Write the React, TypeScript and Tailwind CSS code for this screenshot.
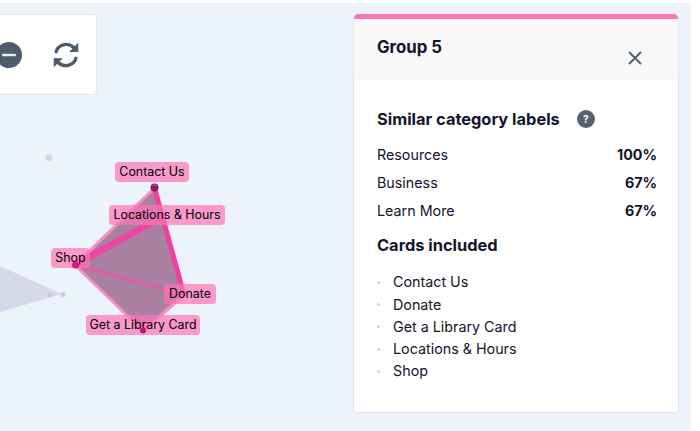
import React from "react";

const labels = [
  { t: "Contact Us", x: 115, y: 162, w: 74, h: 20 },
  { t: "Locations & Hours", x: 109, y: 205, w: 116, h: 20 },
  { t: "Shop", x: 51, y: 248, w: 39, h: 20 },
  { t: "Donate", x: 164, y: 284, w: 52, h: 20 },
  { t: "Get a Library Card", x: 86, y: 315, w: 114, h: 20 },
];

const sims = [
  ["Resources", "100%", "h-[27px]"],
  ["Business", "67%", "h-[28px]"],
  ["Learn More", "67%", "h-[28px]"],
];

const cards = ["Contact Us", "Donate", "Get a Library Card", "Locations & Hours", "Shop"];

export default function App() {
  return (
    <div className="w-[700px] h-[431px] bg-white overflow-hidden pt-[3px] pr-[9px] text-[#14142b] font-['Inter','Liberation_Sans',sans-serif]">
      <div className="relative h-[428px] bg-[#edf3fb] flex items-start justify-end pr-[12px] pt-[11px]">
        {/* Toolbar */}
        <div className="absolute left-[-40px] top-[11px] w-[137px] h-[81px] bg-white rounded-[5px] border border-[#e3e6ea] flex items-center justify-end pr-[15px] gap-[28px]">
          <svg width="26" height="26" viewBox="0 0 26 26" className="mr-[1px]">
            <circle cx="13" cy="13" r="13" fill="#4e5d6c" />
            <rect x="6" y="11.8" width="14" height="2.4" rx="1" fill="#e8ecef" />
          </svg>
          <svg width="30" height="30" viewBox="0 0 24 24" fill="none" stroke="#4e5d6c" strokeWidth="2.6">
            <path d="M3.8 10.5A8.5 8.5 0 0 1 18.2 6L21 8.8" />
            <path d="M21.8 2.2v7.3h-7.3z" fill="#4e5d6c" stroke="none" />
            <path d="M20.2 13.5A8.5 8.5 0 0 1 5.8 18L3 15.2" />
            <path d="M2.2 21.8v-7.3h7.3z" fill="#4e5d6c" stroke="none" />
          </svg>
        </div>

        {/* Cluster diagram */}
        <svg className="absolute left-0 top-[-3px]" width="350" height="431" viewBox="0 0 350 431">
          <circle cx="49" cy="157.5" r="3.5" fill="#dcd0ea" />
          <polygon points="0,266 62,294 0,312" fill="#d5d9ea" />
          <circle cx="50" cy="294.5" r="2.5" fill="#c9cbe6" />
          <circle cx="63" cy="294.5" r="2.5" fill="#c9cbe6" />
          <polygon points="154.5,188 184,295 143,331 75,265" fill="#a9809f" stroke="#f78fc4" strokeWidth="3" strokeLinejoin="round" />
          <line x1="154.5" y1="188" x2="184" y2="295" stroke="#ef3fa2" strokeWidth="5" />
          <line x1="75" y1="265" x2="165" y2="215" stroke="#e84aa3" strokeWidth="7" />
          <line x1="75" y1="265" x2="184" y2="295" stroke="#e45aa5" strokeWidth="2.5" />
        </svg>
        {labels.map((l) => (
          <div
            key={l.t}
            className="absolute rounded-[4px] bg-[#ff74b8]/70 text-black text-[12.4px] leading-none flex items-center justify-center whitespace-nowrap"
            style={{ left: l.x, top: l.y - 3, width: l.w, height: l.h }}
          >
            {l.t}
          </div>
        ))}
        <svg className="absolute left-0 top-[-3px] pointer-events-none" width="350" height="431" viewBox="0 0 350 431">
          <circle cx="154.5" cy="187.5" r="4" fill="#7d2360" />
          <path d="M151 186a4 4 0 0 1 7 0z" fill="#ee12a8" />
          <circle cx="75.5" cy="265" r="3.5" fill="#e0148c" />
          <circle cx="143" cy="330.5" r="3" fill="#c4157a" />
        </svg>

        {/* Side panel */}
        <div className="relative w-[326px] h-[399px] bg-white rounded-[5px] border-x border-b border-[#e1e4e9] overflow-hidden flex flex-col">
          <div className="h-[5px] bg-[#ff74b5] shrink-0" />
          <div className="h-[61px] bg-[#f8f8f8] rounded-b-[5px] flex justify-between pl-[23px] pr-[36px] shrink-0">
            <div className="text-[16.8px] font-bold leading-none pt-[20px]">Group 5</div>
            <svg className="mt-[32px]" width="14" height="14" viewBox="0 0 14 14" stroke="#4e5d6c" strokeWidth="1.8" fill="none">
              <path d="M1 1l12 12M13 1L1 13" />
            </svg>
          </div>
          <div className="pl-[23px] pr-[21px] pt-[29px]">
            <div className="flex items-center gap-[17px] h-[20px]">
              <span className="text-[16.4px] font-bold leading-none">Similar category labels</span>
              <span className="w-[18px] h-[18px] rounded-full bg-[#56626f] text-white text-[10px] font-bold flex items-center justify-center">?</span>
            </div>
            <div className="mt-[13px]">
              {sims.map(([a, b, h]) => (
                <div key={a} className={`flex justify-between items-center text-[14.3px] leading-none ${h}`}>
                  <span>{a}</span>
                  <span className="font-bold">{b}</span>
                </div>
              ))}
            </div>
            <div className="text-[16.4px] font-bold leading-none mt-[12px]">Cards included</div>
            <ul className="mt-[18px]">
              {cards.map((c) => (
                <li key={c} className="flex items-center h-[22.2px] text-[14.3px] leading-none">
                  <span className="w-[3px] h-[3px] rounded-full bg-[#cfd5da] mr-[13px]" />
                  {c}
                </li>
              ))}
            </ul>
          </div>
        </div>
      </div>
    </div>
  );
}
